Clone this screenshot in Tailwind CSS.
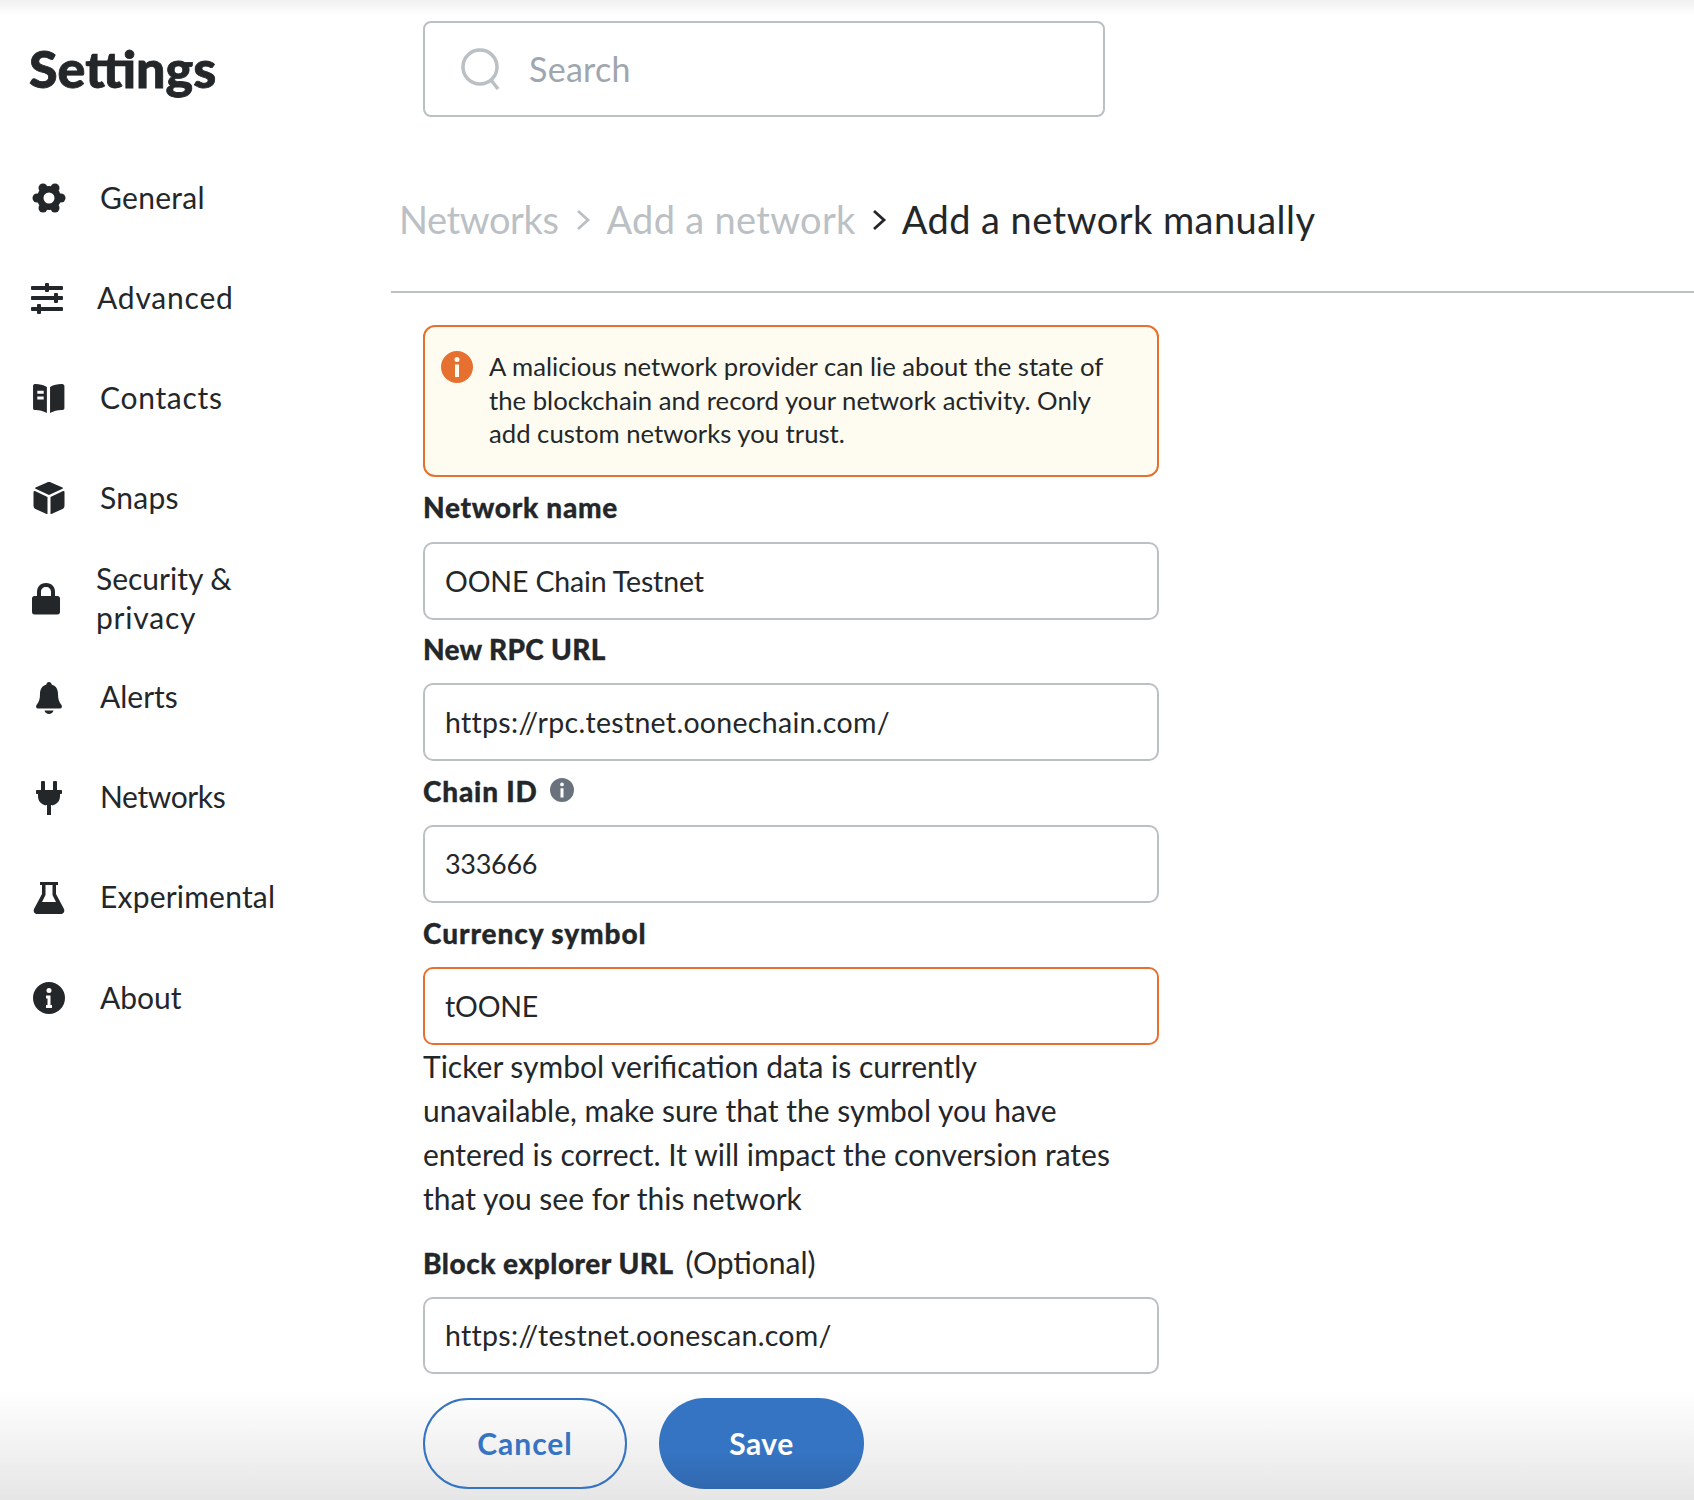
<!DOCTYPE html>
<html>
<head>
    <meta charset="utf-8">
    <title>Settings</title>
    <script src="https://cdn.jsdelivr.net/npm/@tailwindcss/browser@4"></script>
</head>
<body class="bg-white">
<div class="relative w-[1694px] h-[1500px] overflow-hidden flex font-['Lato',sans-serif] text-[#24272a]">
    <div class="absolute top-0 inset-x-0 h-[16px] bg-gradient-to-b from-[#f1f1f1] to-white/0"></div>
    <div class="absolute bottom-0 inset-x-0 h-[110px] bg-gradient-to-t from-[#e6e6e6] to-white/0"></div>

    <!-- sidebar -->
    <aside class="w-[391px] shrink-0 pl-[29px] relative">
        <h1 class="h-[140px] pt-[38px] text-[52px] leading-[60px] font-black [-webkit-text-stroke:0.8px_#24272a]">Settings</h1>
        <nav class="mt-[8px] text-[30px] leading-[39px] tracking-[0.3px]">
            <div class="h-[100px] flex items-center">
                <svg class="w-[34px] h-[30px] ml-[3px] mr-[34px]" viewBox="0 0 34 30" fill="#24272a"><circle cx="17" cy="15" r="12"/><circle cx="29" cy="15" r="4.500"/><circle cx="5" cy="15" r="4.500"/><circle cx="23" cy="5" r="4.500"/><circle cx="11" cy="5" r="4.500"/><circle cx="23" cy="25" r="4.500"/><circle cx="11" cy="25" r="4.500"/><circle cx="17" cy="15" r="5.500" fill="#fff"/></svg>
                <span class="-mt-[2px]">General</span>
            </div>
            <div class="h-[100px] flex items-center">
                <svg class="w-[34px] h-[34px] ml-[1px] mr-[33px]" viewBox="0 0 34 34" fill="#24272a"><rect x="1" y="5" width="32" height="4" rx="1"/><rect x="1" y="15" width="32" height="4" rx="1"/><rect x="1" y="26" width="32" height="4" rx="1"/><rect x="15" y="2" width="4" height="9" rx="1"/><rect x="24" y="12" width="4" height="10" rx="1"/><rect x="7" y="23" width="4" height="10" rx="1"/></svg>
                <span class="-mt-[2px] tracking-[0.8px]">Advanced</span>
            </div>
            <div class="h-[100px] flex items-center">
                <svg class="w-[34px] h-[29px] ml-[3px] mr-[34px]" viewBox="1 3 32 30" preserveAspectRatio="none" fill="#24272a"><path fill-rule="evenodd" d="M2 5c0-1.500 1-2 2.500-2 3.500 0 7 .8 10.500 3v27c-3.500-2-7-3-10.500-3C3 30 2 29.500 2 28zM6 10v3h6v-3zM6 16v3h6v-3z"/><path d="M18 6c3.500-2.200 7-3 10.500-3C30 3 31.500 3.500 31.500 5v23c0 1.500-1.500 2-3 2-3.500 0-7 1-10.500 3z"/></svg>
                <span class="-mt-[2px] tracking-[0.7px]">Contacts</span>
            </div>
            <div class="h-[100px] flex items-center">
                <svg class="w-[34px] h-[34px] ml-[3px] mr-[34px]" viewBox="0 0 34 34" fill="#24272a"><path d="M15 1.500c1.300-.6 2.700-.6 4 0l11.500 5c.5.3.5 1 0 1.300L17 14 3.500 7.800c-.5-.3-.5-1 0-1.300z"/><path d="M1.500 11c0-.8.7-1.200 1.400-.9L15.500 16v17c-.5 0-1 0-1.500-.3L3.500 28c-1.200-.6-2-1.800-2-3.200z"/><path d="M32.500 11c0-.8-.7-1.200-1.400-.9L18.500 16v17c.5 0 1 0 1.500-.3L30.500 28c1.200-.6 2-1.800 2-3.200z"/></svg>
                <span class="-mt-[2px]">Snaps</span>
            </div>
            <div class="h-[100px] flex items-center">
                <svg class="w-[34px] h-[34px] ml-[1px] mr-[32px]" viewBox="0 0 34 34" fill="#24272a"><path fill-rule="evenodd" d="M16 2c6 0 9 4 9 9v4h2.500c1.500 0 2.500 1 2.500 2.500V31c0 1.500-1 2.500-2.500 2.500h-23C3 33.500 2 32.500 2 31V17.500C2 16 3 15 4.500 15H7v-4c0-5 3-9 9-9zM11 15h10v-4c0-3-2-5-5-5s-5 2-5 5z"/></svg>
                <span class="-mt-[1px] tracking-[0]">Security &amp;<br><span class="tracking-[0.8px]">privacy</span></span>
            </div>
            <div class="h-[100px] flex items-center">
                <svg class="w-[34px] h-[34px] ml-[3px] mr-[34px]" viewBox="0 0 34 34" fill="#24272a"><path d="M17 1c1.500 0 2.500 1 2.600 2.500C24.500 5 26 9 26 13c0 5 1 8 3.500 11 1 1.500.3 3.500-1.500 3.500H6c-1.800 0-2.500-2-1.500-3.500C7 21 8 18 8 13c0-4 1.500-8 6.400-9.500C14.500 2 15.500 1 17 1z"/><path d="M12.500 29.500h9c-.5 2-2.300 3.500-4.500 3.500s-4-1.500-4.500-3.500z"/></svg>
                <span class="-mt-[3px] tracking-[0]">Alerts</span>
            </div>
            <div class="h-[100px] flex items-center">
                <svg class="w-[34px] h-[34px] ml-[3px] mr-[34px]" viewBox="0 0 34 34" fill="#24272a"><rect x="9" y="0" width="4" height="10" rx="1"/><rect x="21" y="0" width="4" height="10" rx="1"/><path d="M5 9h24c.6 0 1 .4 1 1v2c0 .6-.4 1-1 1h-1v2c0 5-3 8.500-8 9.500V24h-6v.5C9 23.500 6 20 6 15v-2H5c-.6 0-1-.4-1-1v-2c0-.6.4-1 1-1z"/><rect x="15" y="24" width="4" height="10"/></svg>
                <span class="-mt-[3px] tracking-[-0.4px]">Networks</span>
            </div>
            <div class="h-[100px] flex items-center">
                <svg class="w-[34px] h-[34px] ml-[3px] mr-[34px]" viewBox="0 0 34 34" fill="#24272a"><path fill-rule="evenodd" d="M8 1h18v3h-2v9l8 15c1 2.500-.5 5-3 5H5c-2.500 0-4-2.500-3-5l8-15V4H8zM13.500 4v10l-3.500 7h14l-3.500-7V4z"/></svg>
                <span class="-mt-[3px] tracking-[0.2px]">Experimental</span>
            </div>
            <div class="h-[100px] flex items-center">
                <svg class="w-[34px] h-[34px] ml-[3px] mr-[34px]" viewBox="0 0 34 34" fill="#24272a"><path fill-rule="evenodd" d="M17 1a16 16 0 1 0 0 32 16 16 0 0 0 0-32zM17 7a2.500 2.500 0 1 1 0 5 2.500 2.500 0 0 1 0-5zM14 14.500h4.500V24H20v3h-6v-3h1.500v-6.500H14z"/></svg>
                <span class="-mt-[2px] tracking-[0]">About</span>
            </div>
        </nav>
    </aside>

    <!-- main -->
    <main class="flex-1 relative">
        <div class="h-[117px] pt-[21px] pl-[32px]">
            <div class="w-[682px] h-[96px] border-2 border-[#bbc0c5] rounded-[8px] flex items-center pl-[35px]">
                <svg class="w-[44px] h-[44px] mr-[25px]" viewBox="0 0 44 44" fill="none" stroke="#bbc0c5" stroke-width="3.500"><circle cx="20" cy="20" r="17"/><path d="M31 33l7 9"/></svg>
                <span class="text-[34px] text-[#9fa6ae] tracking-[0.3px] -mt-[2px]">Search</span>
            </div>
        </div>
        <div class="h-[176px] border-b-2 border-[#bbc0c5] pl-[8px] flex items-center pt-[31px] text-[38px] whitespace-nowrap">
            <span class="text-[#bbc0c5] tracking-[-0.4px]">Networks</span>
            <svg class="w-[15px] h-[24px] ml-[17px] mr-[16px]" viewBox="0 0 15 24" fill="none" stroke="#bbc0c5" stroke-width="2.800"><path d="M2 3l10 9-10 9"/></svg>
            <span class="text-[#bbc0c5] tracking-[0.3px]">Add a network</span>
            <svg class="w-[15px] h-[24px] ml-[16px] mr-[15px]" viewBox="0 0 15 24" fill="none" stroke="#24272a" stroke-width="2.800"><path d="M2 3l10 9-10 9"/></svg>
            <span class="tracking-[0.45px]">Add a network manually</span>
        </div>

        <div class="pl-[32px] w-[768px] pt-[32px]">
            <div class="h-[152px] border-2 border-[#e4712f] rounded-[12px] bg-[#fefcf0] flex pl-[16px] pt-[24px] pr-[40px]">
                <svg class="w-[32px] h-[32px] shrink-0 mr-[16px]" viewBox="0 0 32 32"><path fill="#e67030" fill-rule="evenodd" d="M16 0a16 16 0 1 0 0 32 16 16 0 0 0 0-32zM16 6a2.500 2.500 0 1 1 0 5 2.500 2.500 0 0 1 0-5zM14 13.500h4V26h-4z"/></svg>
                <p class="text-[25.700px] leading-[33.500px] -mt-[1px]">A malicious network provider can lie about the state of the blockchain and record your network activity. Only add custom networks you trust.</p>
            </div>

            <label class="block mt-[12px] mb-[17px] text-[28px] leading-[36px] font-black tracking-[0.7px] [-webkit-text-stroke:0.3px_#24272a]">Network name</label>
            <div class="h-[78px] border-2 border-[#bbc0c5] rounded-[10px] flex items-center pl-[20px] text-[28.500px] tracking-[-0.15px]">OONE Chain Testnet</div>

            <label class="block mt-[11px] mb-[16px] text-[28px] leading-[36px] font-black tracking-[0.3px] [-webkit-text-stroke:0.3px_#24272a]">New RPC URL</label>
            <div class="h-[78px] border-2 border-[#bbc0c5] rounded-[10px] flex items-center pl-[20px] text-[28.500px] tracking-[0.3px]">https://rpc.testnet.oonechain.com/</div>

            <label class="mt-[12px] mb-[16px] text-[28px] leading-[36px] font-black tracking-[0.8px] [-webkit-text-stroke:0.3px_#24272a] flex items-center">Chain ID
                <svg class="w-[24px] h-[24px] ml-[12px] -mt-[3px]" viewBox="0 0 32 32"><path fill="#6a737d" fill-rule="evenodd" d="M16 0a16 16 0 1 0 0 32 16 16 0 0 0 0-32zM16 6a2.500 2.500 0 1 1 0 5 2.500 2.500 0 0 1 0-5zM14 13.500h4V26h-4z"/></svg>
            </label>
            <div class="h-[78px] border-2 border-[#bbc0c5] rounded-[10px] flex items-center pl-[20px] text-[27px] tracking-[-0.3px]">333666</div>

            <label class="block mt-[12px] mb-[16px] text-[28px] leading-[36px] font-black tracking-[0.9px] [-webkit-text-stroke:0.3px_#24272a]">Currency symbol</label>
            <div class="h-[78px] border-2 border-[#e4712f] rounded-[10px] flex items-center pl-[20px] text-[28.500px] tracking-[-0.2px]">tOONE</div>
            <p class="text-[30px] leading-[44px] w-[700px] -mt-[1px]">Ticker symbol verification data is currently unavailable, make sure that the symbol you have entered is correct. It will impact the conversion rates that you see for this network</p>

            <div class="mt-[24px] mb-[16px] text-[30px] leading-[36px]"><span class="font-black text-[28px] tracking-[0.5px] [-webkit-text-stroke:0.3px_#24272a]">Block explorer URL</span><span class="ml-[12px]">(Optional)</span></div>
            <div class="h-[77px] border-2 border-[#bbc0c5] rounded-[10px] flex items-center pl-[20px] text-[28.500px] tracking-[0.3px]">https://testnet.oonescan.com/</div>

            <div class="mt-[24px] flex gap-[32px] text-[30px] font-bold tracking-[1px]">
                <button class="w-[204px] h-[91px] rounded-full border-2 border-[#3574c2] text-[#3574c2]">Cancel</button>
                <button class="w-[205px] h-[91px] rounded-full bg-gradient-to-b from-[#3574c2] from-60% to-[#3068ae] text-white tracking-[0.5px]">Save</button>
            </div>
        </div>
    </main>
</div>
</body>
</html>
